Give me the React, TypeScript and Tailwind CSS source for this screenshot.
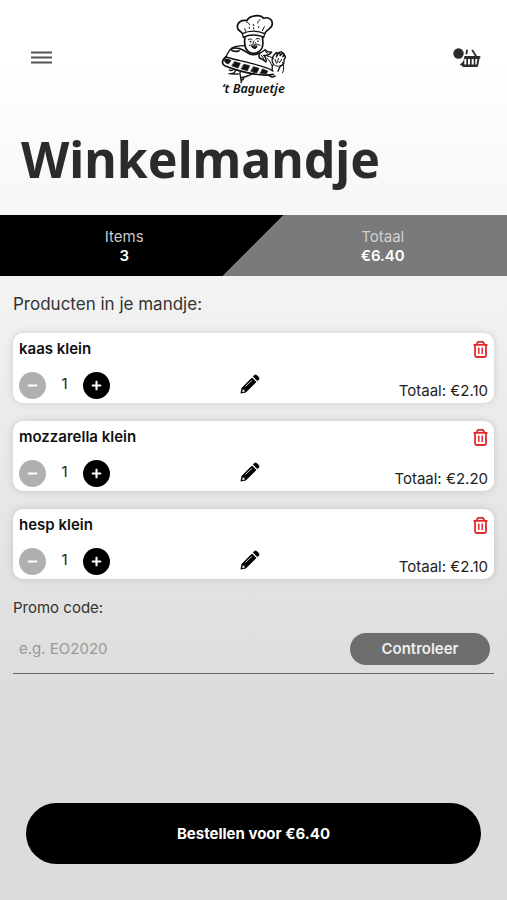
import { useState } from "react";
import { FaMinus, FaPlus } from "react-icons/fa";

const initialItems = [
  { id: 1, name: "kaas klein", price: 2.1, amount: 1 },
  { id: 2, name: "mozzarella klein", price: 2.2, amount: 1 },
  { id: 3, name: "hesp klein", price: 2.1, amount: 1 },
];

const formatPrice = (value: number) => `€${value.toFixed(2)}`;

function Logo() {
  return (
    <svg viewBox="0 0 261 300" className="h-[100px] w-[87px]" fill="none" stroke="#111" strokeWidth="4" strokeLinecap="round" strokeLinejoin="round" role="img" aria-label="'t Baguetje">
      {/* hat */}
      <path d="M97 86C95 78 82 78 82 66c0-15 14-22 29-19 6-15 39-21 50-7 12-5 26 2 26 16 0 16-18 16-23 30" strokeWidth="5" />
      <path d="M97 86c19-9 44-10 67 0M100 97c18-9 38-9 58-2M97 86l3 11M164 86l-3 12" />
      <path d="M110 52c5 1 8 4 9 8M150 44c-5 3-7 6-7 10M104 71l3 8M163 65l-6 12M130 58l1 4M131 68v4M118 67v3M146 65v3" strokeWidth="3" />
      {/* face */}
      <path d="M105 97c-3 18 0 36 13 45 15 7 32 1 38-13 4-11 3-22 1-32" strokeWidth="5" />
      <path d="M115 104c4-3 8-3 11 0M138 102c5-3 9-2 12 1" strokeWidth="3" />
      <circle cx="122" cy="110" r="2.500" fill="#111" stroke="none" />
      <circle cx="144" cy="109" r="2.500" fill="#111" stroke="none" />
      <path d="M132 108c-4 6-4 9 1 10 5 1 7-2 4-5M118 121c6-2 10-1 14 0 6 0 11-4 18-1" strokeWidth="3" />
      <path d="M125 124c6 2 12 2 16-1 0 9-13 11-16 1z" fill="#111" strokeWidth="3" />
      {/* shoulders and scarf */}
      <path d="M102 122c-13 0-27 1-37 8-8 6-13 16-19 29" />
      <path d="M66 130c10-2 22-1 33 5 10 5 16 14 30 14 8 0 14-2 20-5M62 134c8 6 16 7 25 3" strokeWidth="5" />
      <path d="M149 144c6-2 12-5 16-10 6 6 13 8 20 7-6 8-14 12-24 10 6 6 9 12 7 20-6-6-12-10-20-12-2-6-2-10 1-15z" />
      <path d="M153 150l9 12M166 140l7 5M147 153l5 8" strokeWidth="3" />
      {/* baguette */}
      <path d="M47 156c-11 9-14 21-1 27 24 10 50 17 76 22 24 5 50 7 68 3" strokeWidth="5" />
      <path d="M47 156c27 8 54 13 80 20 25 6 46 11 62 22" />
      <path d="M44 164c3-3 12-2 19 3l-8 10c-8-2-13-7-11-13zM74 170l17 5-7 14-18-6zM102 178l17 4-7 15-18-5zM131 185l16 5-6 13-18-4zM158 192l15 6-4 9-18-2z" fill="#111" strokeWidth="2" />
      {/* right hand */}
      <path d="M187 197c-2-7-1-14 3-20-5-8-4-19 2-27l8-8c3 3 1 9-1 14l7-12c4-1 6 3 4 8l8-8c4 1 4 6 0 11l6-4c4 2 2 9-2 13 2 10-3 17-11 19l-7 16" />
      <path d="M171 160c7 5 11 12 14 21M173 154c8 1 14 3 19 8M196 164l3 11M205 160l-2 12M215 163l-7 10M218 172c3 12 5 20 0 31M192 179c6 5 12 6 19 4" strokeWidth="3" />
      <path d="M206 143l8-3 9 8" />
      {/* left hand and apron */}
      <path d="M76 195c0 8-5 11-11 10M57 206c10 2 18 1 28 1M68 195c-3 2-7 2-10 0" />
      <path d="M91 200c-4 8 2 12 1 20 3 5 3 9 1 13M93 218c16-2 26-8 41-15M93 226c6-1 8-4 8-8" />
      <path d="M178 212c5 4 13 5 17 1" strokeWidth="5" />
      <text x="36" y="263" fill="#111" stroke="none" fontSize="38" fontWeight="600" fontStyle="italic" fontFamily="'Noto Sans', sans-serif">
        ‘t Baguetje
      </text>
    </svg>
  );
}

function BasketIcon() {
  return (
    <svg viewBox="0 0 28 20" className="h-5 w-7" fill="none" aria-hidden="true">
      <circle cx="5.500" cy="5.500" r="5.200" fill="#2b2b2b" />
      <path d="M14 2.500l-.6 3M19.500 2.500l3.500 5.500" stroke="#2b2b2b" strokeWidth="1.800" strokeLinecap="round" />
      <path fillRule="evenodd" fill="#2b2b2b" d="M11.500 8h15q1 0 1 1.200t-1 1.200l-1.300 7.100q-.3 1.500-1.500 1.500H10.500q-1.200 0-1.500-1.500l-2-.3q-.3-1.200 1-1.500l2.300-2.500zM11.300 11v5.500h2v-5.500zM15 11v5.500h2v-5.500zM18.700 11v5.500h2v-5.500zM22.400 11l-.2 5.500h1.200l1-5.500z" />
    </svg>
  );
}

function PencilIcon() {
  return (
    <svg viewBox="0 0 20 20" className="size-5" fill="none" aria-hidden="true">
      <path d="M14.300 1.200q1.300-1.200 2.600 0l1.900 1.900q1.200 1.300 0 2.600l-1.500 1.400-4.400-4.500z" fill="#000" />
      <path fillRule="evenodd" d="M12 3.400l4.500 4.500L5.800 18.400.5 19.500l1-5.600zM2.800 15.200l-.6 2.700 2.700-.5q-.3-1.700-2.100-2.200z" fill="#000" />
      <path d="M5.500 12.500l6.500-6.200" stroke="#fff" strokeWidth="0.800" />
    </svg>
  );
}

function TrashIcon() {
  return (
    <svg viewBox="0 0 16 18" className="h-[18px] w-4" fill="none" stroke="#e3292c" strokeLinejoin="round" aria-hidden="true">
      <path d="M1.500 4.800h14M4.500 4.500l1.600-2.700h4.800l1.600 2.700M3 5v10.500q0 1.500 1.500 1.500h8q1.500 0 1.500-1.500V5" strokeWidth="1.800" />
      <path d="M6.800 7.500v6.500M10.200 7.500v6.500" strokeWidth="1.500" />
    </svg>
  );
}

export default function App() {
  const [items, setItems] = useState(initialItems);

  const count = items.reduce((sum, item) => sum + item.amount, 0);
  const total = formatPrice(items.reduce((sum, item) => sum + item.amount * item.price, 0));

  const changeAmount = (id: number, step: number) =>
    setItems(items.map((item) => (item.id === id ? { ...item, amount: item.amount + step } : item)));

  return (
    <div className="flex min-h-screen flex-col bg-[linear-gradient(180deg,#ffffff_60px,#dcdcdc_700px)] font-['Inter',sans-serif] text-[15px] leading-5 text-[#222]">
      <header className="grid grid-cols-[1fr_auto_1fr] items-center px-[26px] pt-[5px]">
        <button type="button" aria-label="Menu" className="justify-self-start px-[5px] pt-1">
          <svg viewBox="0 0 21 13" className="h-[13px] w-[21px]" stroke="#555" strokeWidth="2" aria-hidden="true">
            <path d="M0 1.500h21M0 6.500h21M0 11.500h21" />
          </svg>
        </button>
        <Logo />
        <button type="button" aria-label="Winkelmandje" className="justify-self-end pt-[6px]">
          <BasketIcon />
        </button>
      </header>

      <main className="flex grow flex-col">
        <h1 className="px-[21px] pt-5 pb-[22px] font-['Noto_Sans',sans-serif] text-[50px] leading-[68px] font-bold text-[#2b2b2b]">
          Winkelmandje
        </h1>

        <dl className="grid grid-cols-2 gap-[10px] bg-[linear-gradient(135deg,#000_50%,#7a7a7a_50%)] pt-3 pb-[11px] text-center leading-[19px]">
          <div>
            <dt className="text-[#c8c8c8]">Items</dt>
            <dd className="font-semibold text-white">{count}</dd>
          </div>
          <div>
            <dt className="text-[#d0d0d0]">Totaal</dt>
            <dd className="font-semibold text-white">{total}</dd>
          </div>
        </dl>

        <section className="px-[13px] pt-[18px]">
          <h2 className="text-[17px] text-[#333]">Producten in je mandje:</h2>
          <ul className="mt-[19px] flex flex-col gap-[18px]">
            {items.map(({ id, name, price, amount }) => (
              <li key={id} className="rounded-[10px] bg-white px-[6px] pt-[6px] pb-1 shadow-[0_0_8px_rgba(0,0,0,0.14)]">
                <div className="flex items-center justify-between">
                  <h3 className="font-semibold text-[#111]">{name}</h3>
                  <button type="button" aria-label={`Verwijder ${name}`} onClick={() => setItems(items.filter((item) => item.id !== id))}>
                    <TrashIcon />
                  </button>
                </div>
                <div className="mt-[13px] grid grid-cols-[1fr_auto_1fr] items-center">
                  <div className="flex items-center">
                    <button
                      type="button"
                      aria-label="Minder"
                      disabled={amount === 1}
                      onClick={() => changeAmount(id, -1)}
                      className="flex size-[27px] items-center justify-center rounded-full bg-black text-[11px] text-white disabled:bg-[#b0b0b0]"
                    >
                      <FaMinus />
                    </button>
                    <span className="w-[37px] pb-1 text-center">{amount}</span>
                    <button
                      type="button"
                      aria-label="Meer"
                      onClick={() => changeAmount(id, 1)}
                      className="flex size-[27px] items-center justify-center rounded-full bg-black text-[11px] text-white"
                    >
                      <FaPlus />
                    </button>
                  </div>
                  <button type="button" aria-label={`Bewerk ${name}`} className="pr-2 pb-1">
                    <PencilIcon />
                  </button>
                  <p className="self-end text-right leading-4">Totaal: {formatPrice(price * amount)}</p>
                </div>
              </li>
            ))}
          </ul>
        </section>

        <form className="px-[13px] pt-[19px]" onSubmit={(e) => e.preventDefault()}>
          <label htmlFor="promo" className="block text-[#333]">
            Promo code:
          </label>
          <div className="mt-[15px] flex items-center border-b border-[#666] pr-1 pb-2 pl-[6px]">
            <input id="promo" type="text" placeholder="e.g. EO2020" className="min-w-0 grow bg-transparent outline-none placeholder:text-[#989898]" />
            <button type="submit" className="h-8 w-[140px] rounded-full bg-[#6e6e6e] font-semibold text-[#eee]">
              Controleer
            </button>
          </div>
        </form>

        <div className="mt-auto px-[26px] pt-8 pb-9">
          <button type="button" className="h-[61px] w-full rounded-full bg-black font-bold text-white">
            Bestellen voor {total}
          </button>
        </div>
      </main>
    </div>
  );
}
